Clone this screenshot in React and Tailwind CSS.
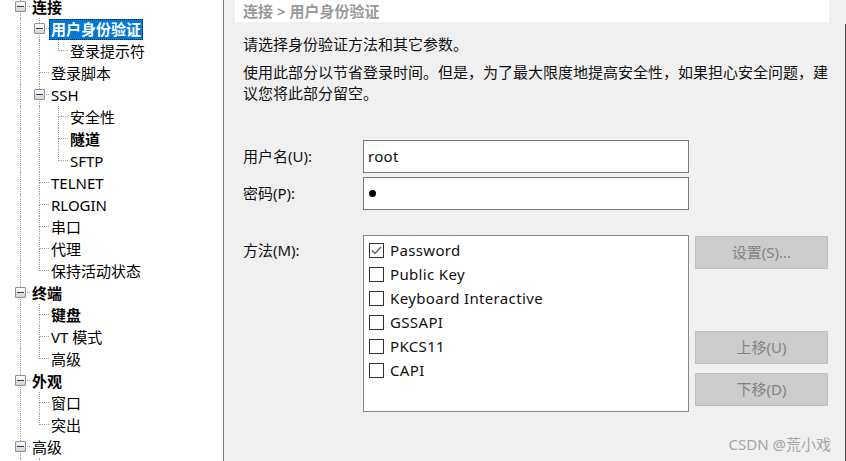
import React from 'react';

const rows = [
  [0, '连接', true, true],
  [1, '用户身份验证', true, true, true],
  [2, '登录提示符'],
  [1, '登录脚本'],
  [1, 'SSH', false, true],
  [2, '安全性'],
  [2, '隧道', true],
  [2, 'SFTP'],
  [1, 'TELNET'],
  [1, 'RLOGIN'],
  [1, '串口'],
  [1, '代理'],
  [1, '保持活动状态'],
  [0, '终端', true, true],
  [1, '键盘', true],
  [1, 'VT 模式'],
  [1, '高级'],
  [0, '外观', true, true],
  [1, '窗口'],
  [1, '突出'],
  [0, '高级', false, true],
];

function hasLater(i, level) {
  for (let j = i + 1; j < rows.length; j++) {
    if (rows[j][0] < level) return false;
    if (rows[j][0] === level) return true;
  }
  return level === 0;
}

function Guide({ on }) {
  return (
    <div className="w-[19px] h-full shrink-0">
      {on && <div className="ml-[9px] h-full border-l border-dotted border-[#a0a0a0]" />}
    </div>
  );
}

function ExpandBox() {
  return (
    <div className="absolute left-[4px] top-[5px] w-[11px] h-[11px] border border-[#919191] rounded-[1px] bg-gradient-to-b from-white to-[#d2d2d2] flex items-center justify-center">
      <div className="w-[7px] h-px bg-[#1f3b73]" />
    </div>
  );
}

function Connector({ last, box }) {
  return (
    <div className="relative w-[19px] h-full flex flex-col shrink-0">
      <div className="ml-[9px] h-[11px] border-l border-b border-dotted border-[#a0a0a0]" />
      <div className={last ? 'ml-[9px] h-[11px]' : 'ml-[9px] h-[11px] border-l border-dotted border-[#a0a0a0]'} />
      {box && <ExpandBox />}
    </div>
  );
}

function Tree() {
  return (
    <div className="flex flex-col pl-[11px] -mt-[4px]">
      {rows.map(([level, label, bold, box, sel], i) => {
        const guides = [];
        for (let a = 0; a < level; a++) guides.push(<Guide key={a} on={hasLater(i, a)} />);
        return (
          <div key={i} className="flex h-[22px] shrink-0 items-stretch">
            {guides}
            <Connector last={!hasLater(i, level)} box={box} />
            <div className="flex items-center">
              <span
                className={
                  sel
                    ? 'px-[2px] h-[21px] leading-[20px] bg-[#0078d7] text-white font-bold outline-1 outline-dotted outline-[#222] -outline-offset-1 whitespace-nowrap'
                    : bold
                    ? 'px-[2px] h-[21px] leading-[20px] text-black font-bold whitespace-nowrap'
                    : 'px-[2px] h-[21px] leading-[20px] text-black whitespace-nowrap'
                }
              >
                {label}
              </span>
            </div>
          </div>
        );
      })}
      <div className="flex h-[22px] shrink-0 items-stretch">
        <Guide on />
        <div className="w-[19px] h-full shrink-0">
          <div className="ml-[9px] h-full border-l border-dotted border-[#a0a0a0]" />
        </div>
      </div>
    </div>
  );
}

function CheckItem({ label, checked }) {
  return (
    <div className="flex items-center h-[24px]">
      <div className="w-[15px] h-[15px] border border-[#333] bg-white flex items-center justify-center shrink-0">
        {checked && (
          <svg width="13" height="13" viewBox="0 0 13 13">
            <path d="M2 6.5 L5 9.5 L11 3" fill="none" stroke="#555" strokeWidth="1.2" />
          </svg>
        )}
      </div>
      <span className="ml-[6px] leading-[20px] text-[#111] tracking-[0.35px] whitespace-nowrap">{label}</span>
    </div>
  );
}

function Btn({ children, className = '' }) {
  return (
    <div className={`w-[133px] h-[33px] bg-[#cccccc] border border-[#bfbfbf] flex items-center justify-center text-[#838383] ${className}`}>
      {children}
    </div>
  );
}

export default function App() {
  return (
    <div className="w-[846px] h-[461px] flex bg-[#f0f0f0] overflow-hidden text-[15px] font-['Noto_Sans','Noto_Sans_CJK_SC',sans-serif] relative">
      <div className="w-[224px] h-full bg-white border-r border-[#7a7a7a] overflow-hidden shrink-0">
        <Tree />
      </div>
      <div className="flex-1 flex flex-col pl-[11px] pr-[16px]">
        <div className="h-[22px] bg-white flex items-center pl-[8px] text-[#9a9a9a] font-bold leading-[20px] whitespace-nowrap">
          连接 &gt; 用户身份验证
        </div>
        <div className="pl-[8px] flex flex-col">
          <div className="mt-[12px] leading-[21px] text-[#111] whitespace-nowrap">请选择身份验证方法和其它参数。</div>
          <div className="mt-[7px] leading-[21px] text-[#111] whitespace-nowrap">
            使用此部分以节省登录时间。但是，为了最大限度地提高安全性，如果担心安全问题，建
            <br />
            议您将此部分留空。
          </div>
          <div className="mt-[36px] flex items-center">
            <div className="w-[120px] text-[#111]">用户名(U):</div>
            <div className="w-[326px] h-[33px] bg-white border border-[#7a7a7a] flex items-center pl-[4px] text-[#111] tracking-[0.3px]">root</div>
          </div>
          <div className="mt-[4px] flex items-center">
            <div className="w-[120px] text-[#111]">密码(P):</div>
            <div className="w-[326px] h-[33px] bg-white border border-[#7a7a7a] flex items-center pl-[5px]">
              <div className="w-[7px] h-[7px] rounded-full bg-black" />
            </div>
          </div>
          <div className="mt-[25px] flex items-start">
            <div className="w-[120px] pt-[4px] text-[#111]">方法(M):</div>
            <div className="w-[326px] h-[177px] bg-white border border-[#828790] pl-[5px] pt-[2px] flex flex-col">
              <CheckItem label="Password" checked />
              <CheckItem label="Public Key" />
              <CheckItem label="Keyboard Interactive" />
              <CheckItem label="GSSAPI" />
              <CheckItem label="PKCS11" />
              <CheckItem label="CAPI" />
            </div>
            <div className="ml-[6px] flex flex-col pt-[1px]">
              <Btn>设置(S)...</Btn>
              <Btn className="mt-[62px]">上移(U)</Btn>
              <Btn className="mt-[9px]">下移(D)</Btn>
            </div>
          </div>
        </div>
      </div>
      <div className="w-px h-full flex flex-col shrink-0">
        <div className="h-[24px]" />
        <div className="flex-1 bg-[#3e4652]" />
      </div>
      <div className="absolute right-[15px] bottom-[7px] text-[#a6a6a6] text-[15px] leading-[20px] whitespace-nowrap">
        CSDN @荒小戏
      </div>
    </div>
  );
}
